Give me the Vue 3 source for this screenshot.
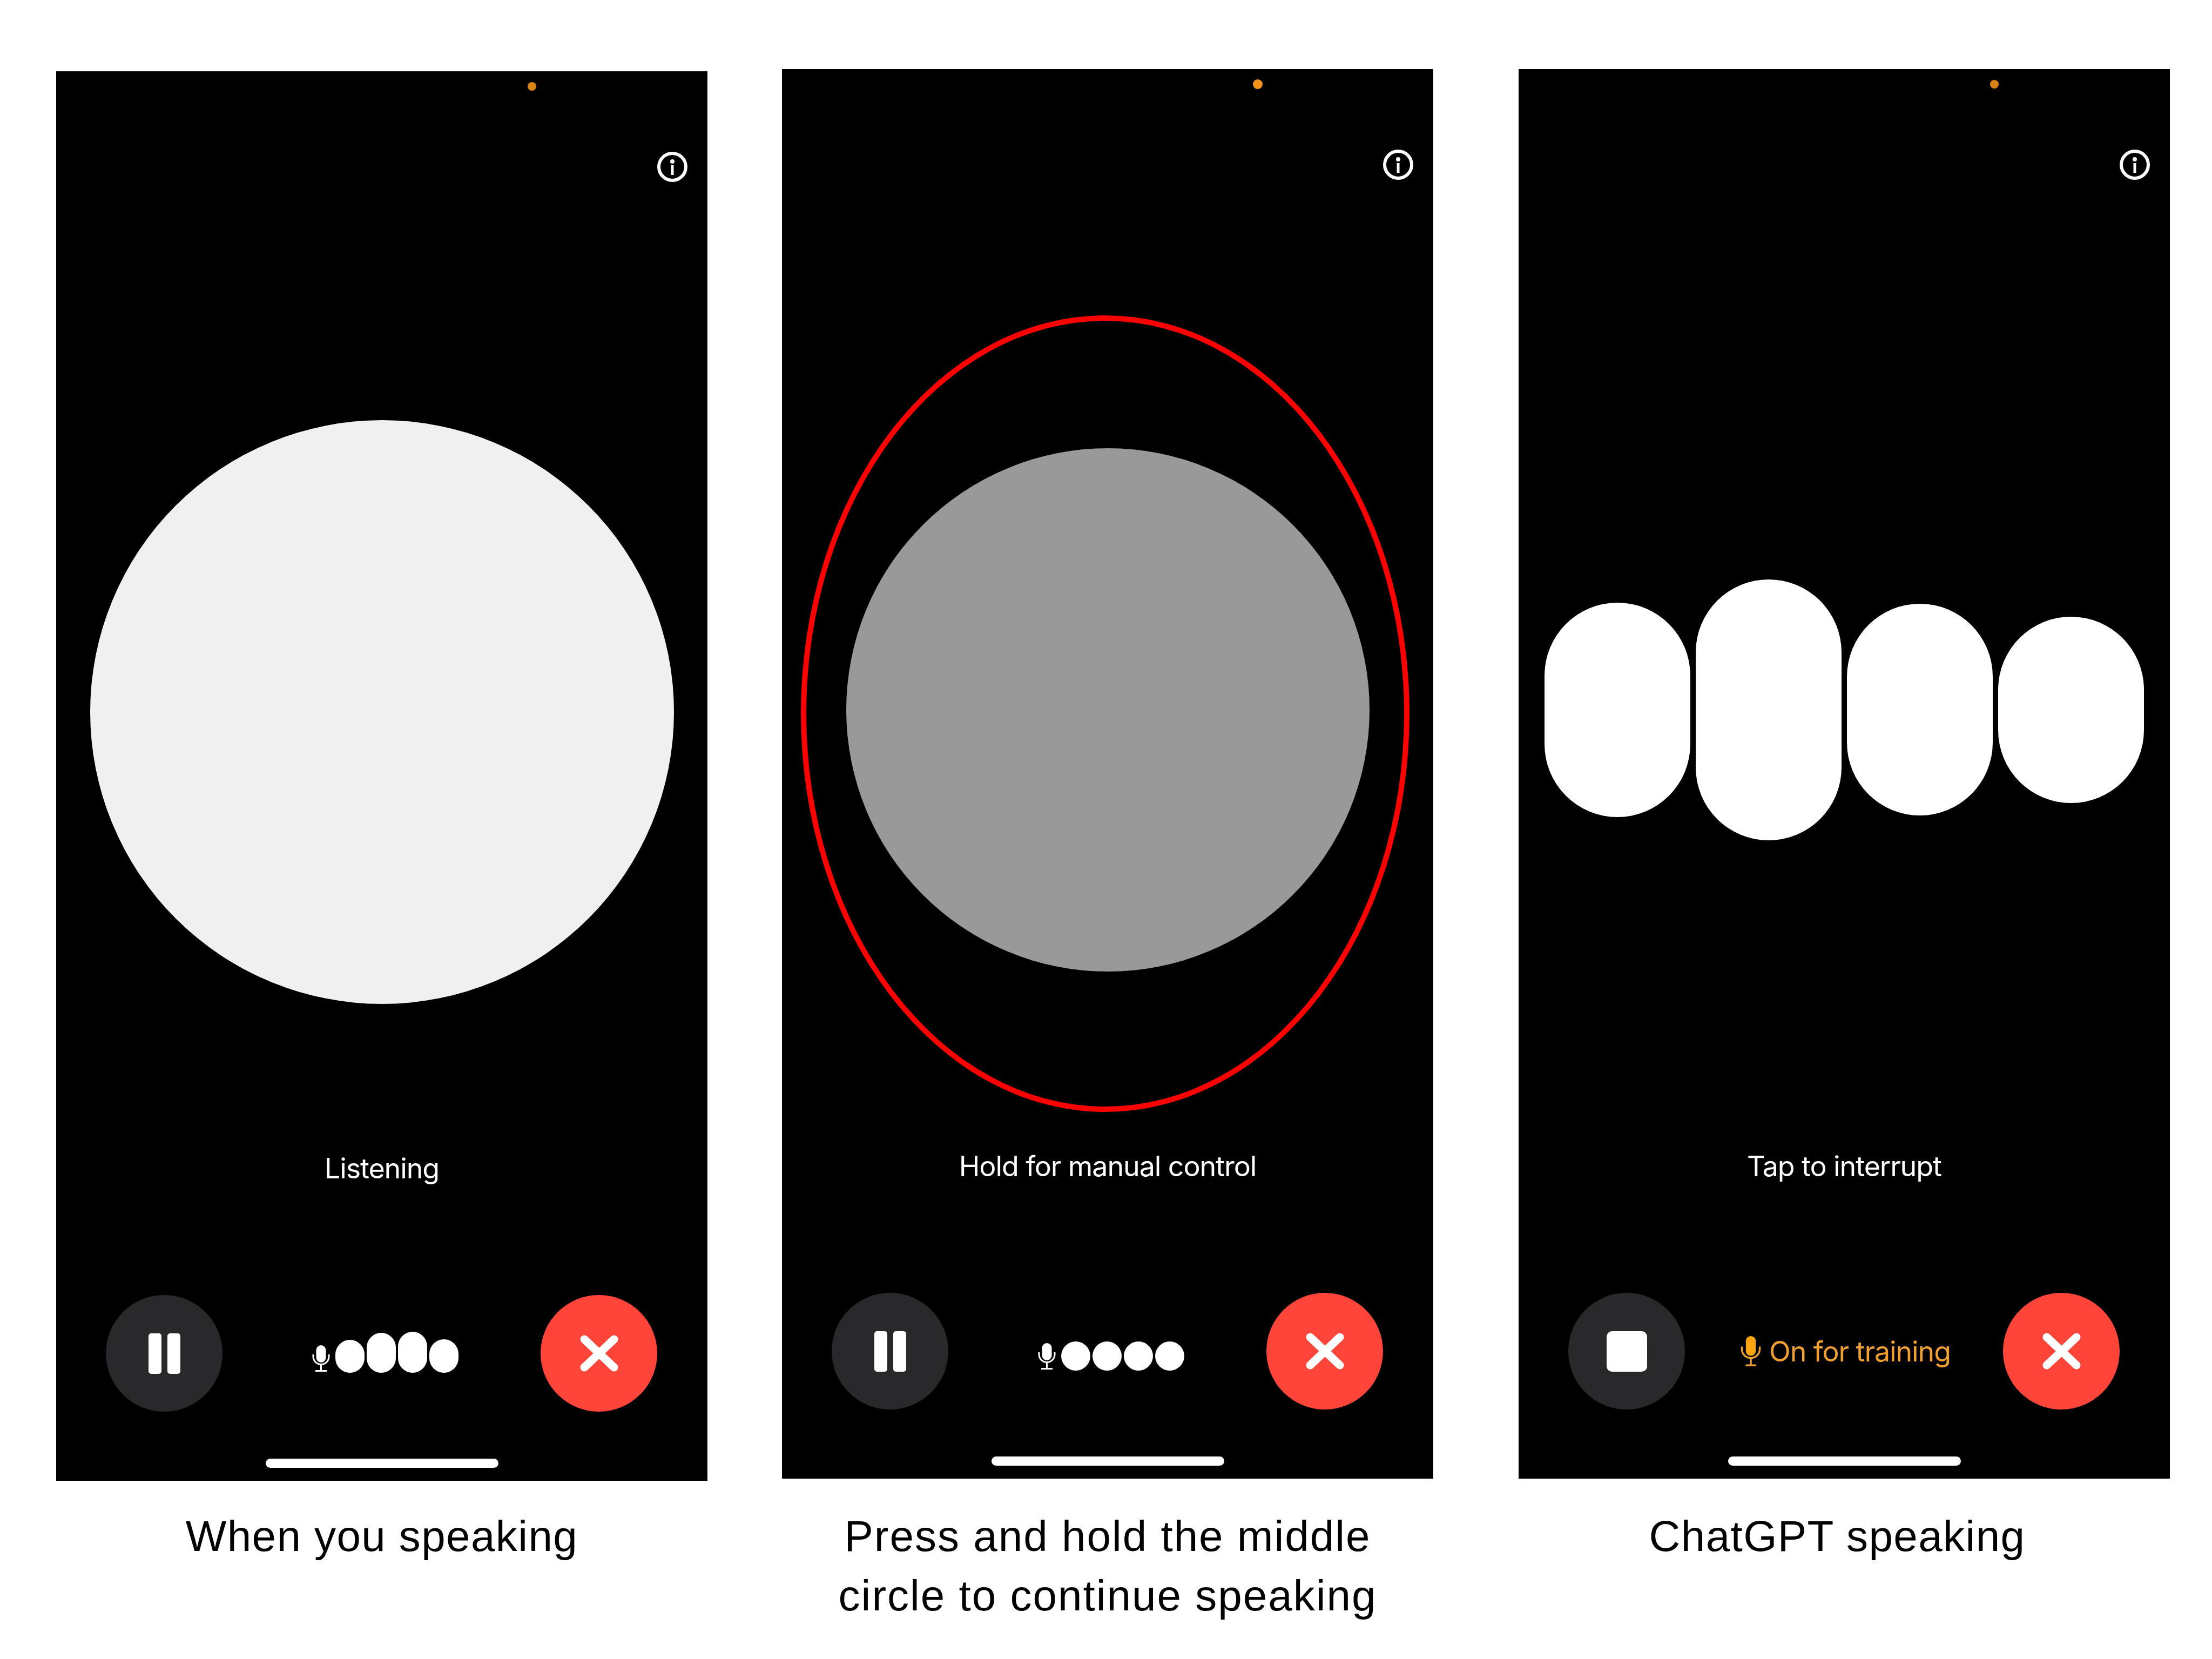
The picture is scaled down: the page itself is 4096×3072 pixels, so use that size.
<template>
  <div class="page">
    <div v-for="screen in screens" :key="screen.caption" class="figure" :class="screen.name">
      <div class="phone">
        <span class="dot"></span>
        <svg class="info" viewBox="0 0 56 56">
          <circle cx="28" cy="28" r="25" fill="none" stroke="#fff" stroke-width="6" />
          <circle cx="28" cy="18" r="4" fill="#fff" />
          <rect x="25.5" y="25" width="5" height="18" fill="#fff" />
        </svg>
        <div v-if="screen.name === 'manual'" class="ring"></div>

        <div class="stage">
          <div v-if="screen.name === 'listen'" class="orb big"></div>
          <div v-if="screen.name === 'manual'" class="orb gray"></div>
          <div v-if="screen.name === 'talk'" class="bars">
            <span v-for="h in [397, 483, 392, 345]" :key="h" :style="{ height: h + 'px' }"></span>
          </div>
        </div>

        <p class="status">{{ screen.status }}</p>

        <div class="controls">
          <button class="round dark">
            <span v-if="screen.name === 'talk'" class="stop"></span>
            <span v-else class="pause"><i></i><i></i></span>
          </button>

          <div v-if="screen.name === 'talk'" class="training">
            <svg class="mic" viewBox="0 0 33 49">
              <rect x="8.5" y="0" width="16" height="32" rx="8" fill="#ffa50f" />
              <path d="M2 17v4a14.5 14.5 0 0 0 29 0v-4M16.5 36v11M8 47.5h17" fill="none" stroke="#f0a030" stroke-width="3" />
            </svg>
            <span>On for training</span>
          </div>
          <div v-else class="wave">
            <svg class="mic" viewBox="0 0 33 49">
              <rect x="7.5" y="0" width="18" height="32" rx="9" fill="#fff" />
              <path d="M2 17v4a14.5 14.5 0 0 0 29 0v-4M16.5 36v11M6 47.5h21" fill="none" stroke="#fff" stroke-width="3" />
            </svg>
            <div class="level">
              <span v-for="(h, i) in screen.level" :key="i" :style="{ height: h + 'px' }"></span>
            </div>
          </div>

          <button class="round red">
            <svg viewBox="0 0 71 68" class="cross">
              <path d="M8 8l55 52M63 8L8 60" fill="none" stroke="#fff" stroke-width="15" stroke-linecap="round" />
            </svg>
          </button>
        </div>

        <div class="home"></div>
      </div>
      <p class="caption">{{ screen.caption }}</p>
    </div>
  </div>
</template>

<script setup>
const screens = [
  { name: 'listen', status: 'Listening', caption: 'When you speaking', level: [61, 74, 76, 62] },
  { name: 'manual', status: 'Hold for manual control', caption: 'Press and hold the middle circle to continue speaking', level: [54, 54, 54, 54] },
  { name: 'talk', status: 'Tap to interrupt', caption: 'ChatGPT speaking', level: [] },
]
</script>

<style>
body {
  background: #fff;
}
</style>

<style scoped>
.page {
  display: flex;
  align-items: flex-start;
  width: 4096px;
  height: 3072px;
  padding: 128px 0 0 104px;
  box-sizing: border-box;
  font-family: Inter, "Noto Sans", sans-serif;
}
.figure {
  width: 1206px;
}
.listen {
  margin: 4px 138px 0 0;
}
.manual {
  margin-right: 158px;
}
.phone {
  position: relative;
  height: 2610px;
  padding-top: 372px;
  box-sizing: border-box;
  background: #000;
  color: #fff;
}
.dot {
  position: absolute;
  left: 873px;
  top: 20px;
  width: 16px;
  height: 16px;
  border-radius: 50%;
  background: #d98311;
}
.manual .dot {
  left: 872px;
  top: 19px;
  width: 18px;
  height: 18px;
  background: #f5921b;
}
.info {
  position: absolute;
  left: 1113px;
  top: 149px;
  width: 56px;
  height: 56px;
}
.ring {
  position: absolute;
  left: 35px;
  top: 456px;
  width: 1127px;
  height: 1475px;
  border: 10px solid #f00;
  border-radius: 50%;
  box-sizing: border-box;
}
.stage {
  height: 1628px;
  display: flex;
  align-items: center;
  justify-content: center;
}
.orb {
  border-radius: 50%;
}
.big {
  width: 1081px;
  height: 1081px;
  background: #f0f0f0;
}
.gray {
  width: 969px;
  height: 969px;
  background: #999;
}
.bars {
  display: flex;
  align-items: center;
  gap: 10px;
}
.bars span {
  width: 270px;
  border-radius: 135px;
  background: #fff;
}
.status {
  margin: 0;
  height: 64px;
  line-height: 64px;
  text-align: center;
  font-size: 52px;
  letter-spacing: -1.1px;
}
.controls {
  display: flex;
  justify-content: space-between;
  margin-top: 202px;
  padding: 0 93px 0 92px;
}
.round {
  width: 216px;
  height: 216px;
  padding: 0;
  border: none;
  border-radius: 50%;
  display: flex;
  align-items: center;
  justify-content: center;
}
.dark {
  background: #29292b;
}
.red {
  background: #ff453a;
}
.pause {
  display: flex;
  gap: 11px;
}
.pause i {
  display: block;
  width: 24px;
  height: 75px;
  border-radius: 5px;
  background: #fff;
}
.stop {
  width: 75px;
  height: 75px;
  border-radius: 10px;
  background: #fff;
}
.cross {
  width: 71px;
  height: 68px;
}
.wave {
  align-self: flex-end;
  display: flex;
  align-items: flex-end;
  gap: 10px;
  margin: 0 0 72px 14px;
}
.wave .mic {
  width: 33px;
  height: 49px;
  margin-bottom: 2px;
}
.level {
  display: flex;
  align-items: flex-end;
  gap: 4px;
}
.level span {
  width: 54px;
  border-radius: 27px;
  background: #fff;
}
.training {
  display: flex;
  align-items: center;
  gap: 15px;
  margin-left: 6px;
  color: #f0a030;
  font-size: 52px;
  letter-spacing: -1.1px;
}
.training .mic {
  width: 38px;
  height: 56px;
}
.home {
  width: 431px;
  height: 17px;
  margin: 87px auto 0;
  border-radius: 9px;
  background: #fff;
}
.caption {
  margin: 0;
  padding-top: 52px;
  color: #000;
  font-family: "Liberation Sans", Arial, sans-serif;
  font-size: 80px;
  line-height: 110px;
  letter-spacing: 1.4px;
  text-align: center;
}
.listen .caption {
  padding-top: 48px;
}
.manual .caption {
  padding: 52px 80px 0;
  letter-spacing: 2px;
}
.talk .caption {
  padding-right: 26px;
}
</style>
